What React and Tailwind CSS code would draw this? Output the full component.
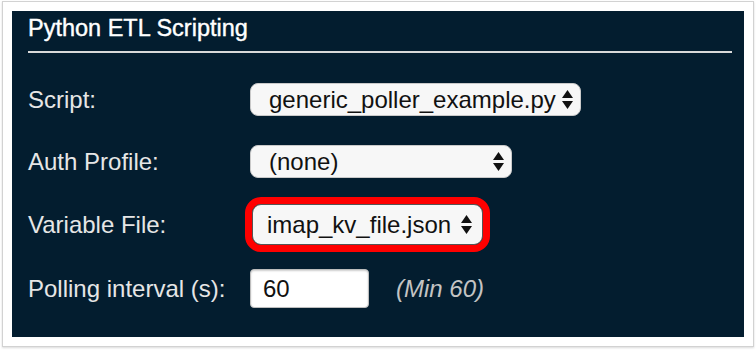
const Arrows = () => (
  <svg width="11" height="19" viewBox="0 0 11 19" className="shrink-0">
    <path d="M0 8 L5.5 0 L11 8 Z" fill="#111" />
    <path d="M0 11 L11 11 L5.5 19 Z" fill="#111" />
  </svg>
);

const Select = ({ value, width, height = "h-[33px]" }) => (
  <div
    className={`${width} ${height} flex items-center justify-between pl-[18px] pr-[7px] rounded-[8px] bg-[#f7f7f7] border border-[#c9c9c9] text-[24px] leading-[28px] text-[#111]`}
  >
    <span>{value}</span>
    <Arrows />
  </div>
);

const Label = ({ children }) => (
  <div className="w-[222px] shrink-0 text-[24px] leading-[28px] text-[#e6e6e6]">
    {children}
  </div>
);

export default function App() {
  return (
    <div className="w-[756px] h-[350px] bg-white pl-[2px] pt-[1px] font-['Liberation_Sans',Arial,sans-serif]">
      <div className="w-[752px] h-[346px] bg-white border border-[#d2d2d2] shadow-[0_1px_2px_rgba(0,0,0,0.15)] p-[9px]">
        <div className="w-full h-full bg-[#031d2f] flex flex-col">
          {/* Header */}
          <div className="ml-[16px] mr-[12px] pt-[4px] pb-[9px] border-b-2 border-[#d9d9d9]">
            <h1 className="text-[23.5px] leading-[27px] font-normal text-white [-webkit-text-stroke:0.4px_white]">
              Python ETL Scripting
            </h1>
          </div>

          <div className="pl-[16px] flex flex-col">
            <div className="mt-[30px] flex items-center">
              <Label>Script:</Label>
              <Select value="generic_poller_example.py" width="w-[331px]" />
            </div>

            <div className="mt-[29px] flex items-center">
              <Label>Auth Profile:</Label>
              <Select value="(none)" width="w-[262px]" />
            </div>

            <div className="mt-[19px] flex items-center">
              <Label>Variable File:</Label>
              <div className="-ml-[5px] border-[7px] border-[#ff0000] rounded-[16px] bg-[#1a1a1a]">
                <div className="w-[231px] h-[41px] flex items-center justify-between pl-[14px] pr-[10px] rounded-[9px] bg-[#f7f7f7] border border-[#555] text-[24px] leading-[28px] text-[#111]">
                  <span>imap_kv_file.json</span>
                  <Arrows />
                </div>
              </div>
            </div>

            <div className="mt-[17px] flex items-center">
              <Label>Polling interval (s):</Label>
              <div className="w-[119px] h-[39px] flex items-center pl-[12px] rounded-[4px] bg-white border border-[#bdbdbd] shadow-[inset_0_1px_2px_rgba(0,0,0,0.2)] text-[24px] leading-[28px] text-[#111]">
                60
              </div>
              <span className="ml-[27px] text-[24px] leading-[28px] italic text-[#c4c4c4]">
                (Min 60)
              </span>
            </div>
          </div>
        </div>
      </div>
    </div>
  );
}
